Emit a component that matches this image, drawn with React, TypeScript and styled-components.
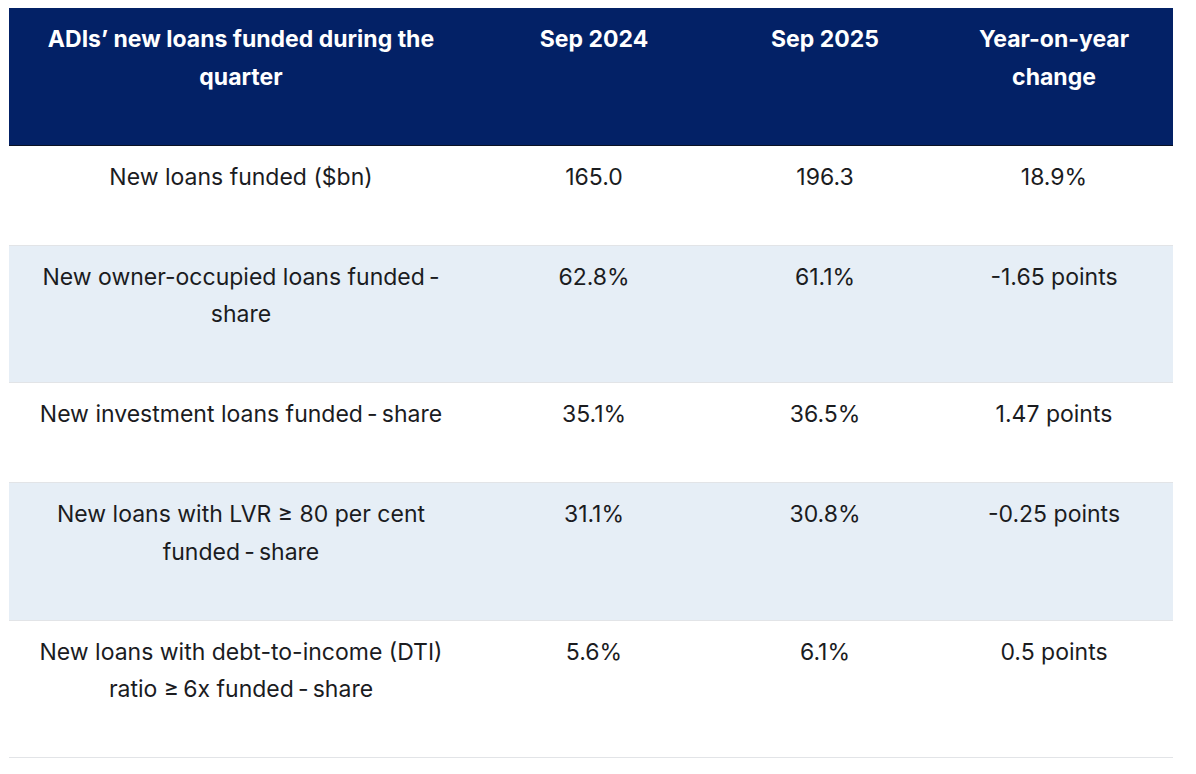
import styled, { createGlobalStyle } from "styled-components";

const GlobalStyle = createGlobalStyle`
  body {
    margin: 0;
    background: #ffffff;
    font-family: Inter, "Open Sans", sans-serif;
  }
`;

const Page = styled.div`
  padding: 8px 23px 0 9px;
`;

const Table = styled.table`
  width: 1164px;
  border-collapse: collapse;
  table-layout: fixed;
  color: #1b1c1f;
  font-size: 23px;
  line-height: 37.5px;
`;

const HeadCell = styled.th`
  background: #032166;
  color: #ffffff;
  font-weight: 700;
  text-align: center;
  vertical-align: top;
  white-space: pre-line;
  padding: 13px 16px 48.5px;
  border-bottom: 1px solid #0b1224;
`;

const Row = styled.tr<{ $shaded?: boolean }>`
  background: ${(p) => (p.$shaded ? "#e6eef6" : "#ffffff")};
  border-bottom: 1px solid #e2e4e7;
`;

const Cell = styled.td`
  text-align: center;
  vertical-align: top;
  white-space: pre-line;
  padding: 13px 16px 48.5px;
`;

const rows = [
  ["New loans funded ($bn)", "165.0", "196.3", "18.9%"],
  ["New owner-occupied loans funded\u2009-\nshare", "62.8%", "61.1%", "-1.65 points"],
  ["New investment loans funded\u2009-\u2009share", "35.1%", "36.5%", "1.47 points"],
  ["New loans with LVR \u2265 80 per cent\nfunded\u2009-\u2009share", "31.1%", "30.8%", "-0.25 points"],
  ["New loans with debt-to-income (DTI)\nratio \u2265\u20096x funded\u2009-\u2009share", "5.6%", "6.1%", "0.5 points"],
];

export default function App() {
  return (
    <>
      <GlobalStyle />
      <Page>
        <Table>
          <colgroup>
            <col style={{ width: 464 }} />
            <col style={{ width: 242 }} />
            <col style={{ width: 220 }} />
            <col style={{ width: 238 }} />
          </colgroup>
          <thead>
            <tr>
              <HeadCell>{"ADIs’ new loans funded during the\nquarter"}</HeadCell>
              <HeadCell>Sep 2024</HeadCell>
              <HeadCell>Sep 2025</HeadCell>
              <HeadCell>{"Year-on-year\nchange"}</HeadCell>
            </tr>
          </thead>
          <tbody>
            {rows.map((r, i) => (
              <Row key={i} $shaded={i % 2 === 1}>
                <Cell>{r[0]}</Cell>
                <Cell>{r[1]}</Cell>
                <Cell>{r[2]}</Cell>
                <Cell>{r[3]}</Cell>
              </Row>
            ))}
          </tbody>
        </Table>
      </Page>
    </>
  );
}
